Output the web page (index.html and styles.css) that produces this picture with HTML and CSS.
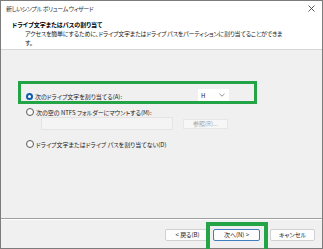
FILE: index.html
```html
<!DOCTYPE html>
<html lang="ja">
<head>
<meta charset="utf-8">
<link rel="stylesheet" href="styles.css">
</head>
<body>
<div class="window">
  <div class="titlebar">
    <span class="title">新しいシンプル ボリューム ウィザード</span>
    <svg class="close" width="7" height="7" viewBox="0 0 7 7"><path d="M0.5 0.5 L6.5 6.5 M6.5 0.5 L0.5 6.5" stroke="#444" stroke-width="0.9" fill="none"/></svg>
  </div>
  <div class="header">
    <div class="h-title">ドライブ文字またはパスの割り当て</div>
    <div class="h-desc">アクセスを簡単にするために、ドライブ文字またはドライブ パスをパーティションに割り当てることができま</div>
    <div class="h-desc">す。</div>
  </div>
  <div class="content">
    <div class="highlight">
      <div class="row row-first">
        <span class="radio checked"></span>
        <span class="label label-fixed">次のドライブ文字を割り当てる(A):</span>
        <span class="dropdown"><span class="dd-val">H</span><svg class="chev" width="6" height="4" viewBox="0 0 6 4"><path d="M0.5 0.8 L3 3.2 L5.5 0.8" stroke="#777" stroke-width="0.8" fill="none"/></svg></span>
      </div>
    </div>
    <div class="row row-second">
      <span class="radio"></span>
      <span class="label">次の空の NTFS フォルダーにマウントする(M):</span>
    </div>
    <div class="pathrow">
      <span class="pathbox"></span>
      <span class="browse">参照(R)...</span>
    </div>
    <div class="row row-third">
      <span class="radio"></span>
      <span class="label">ドライブ文字またはドライブ パスを割り当てない(D)</span>
    </div>
  </div>
  <div class="footer">
    <span class="btn">&lt; 戻る(B)</span>
    <span class="btn btn-next">次へ(N) &gt;</span>
    <span class="btn btn-cancel">キャンセル</span>
  </div>
  <div class="mark-next"></div>
</div>
</body>
</html>
```

FILE: styles.css
```css
html, body {
  margin: 0;
  padding: 0;
  background: #ffffff;
}
body {
  font-family: "Noto Sans CJK JP", "Noto Sans", sans-serif;
  font-size: 6px;
  font-feature-settings: "palt";
  color: #1a1a1a;
  line-height: 9px;
}
.window {
  position: relative;
  width: 321px;
  height: 247px;
  border: 1px solid #7c7c7c;
  background: #f0f0f0;
  display: flex;
  flex-direction: column;
}
.titlebar {
  height: 15px;
  flex: none;
  background: #ffffff;
  display: flex;
  align-items: center;
  justify-content: space-between;
  padding: 0 7px 0 5px;
}
.title {
  color: #333;
  line-height: 15px;
  letter-spacing: -0.4px;
}
.close {
  display: block;
}
.header {
  flex: none;
  height: 34px;
  box-sizing: border-box;
  background: #ffffff;
  padding: 3.5px 0 0 11px;
  border-bottom: 1px solid #d6d6d6;
}
.h-title {
  font-weight: bold;
  color: #000;
}
.h-desc {
  padding-left: 13px;
  color: #1a1a1a;
  white-space: nowrap;
  letter-spacing: -0.2px;
}
.content {
  flex: 1;
  padding: 31px 0 0 17px;
  border-bottom: 1px solid #a0a0a0;
}
.highlight {
  width: 228px;
  border: 3px solid #22a447;
  padding: 4px 0 0 5px;
}
.row {
  display: flex;
  align-items: center;
  height: 9px;
}
.row-first {
  height: 13px;
  align-items: flex-end;
}
.radio {
  width: 6px;
  height: 6px;
  border-radius: 50%;
  border: 1px solid #5c5c5c;
  background: #f8f8f8;
  margin-right: 2px;
  flex: none;
  align-self: center;
}
.row-first .radio {
  align-self: flex-end;
  margin-bottom: 1px;
}
.radio.checked {
  width: 3px;
  height: 3px;
  border: 2.5px solid #0e5cab;
  background: #ffffff;
}
.label-fixed {
  width: 163px;
}
.dropdown {
  width: 31px;
  height: 12px;
  background: #ffffff;
  display: flex;
  align-items: center;
  justify-content: space-between;
  padding: 0 4px 0 3px;
  box-sizing: border-box;
}
.chev {
  display: block;
}
.row-second {
  margin: 3.5px 0 0 8px;
}
.pathrow {
  display: flex;
  align-items: center;
  gap: 10px;
  margin: 0.5px 0 0 23px;
  height: 13px;
}
.pathbox {
  width: 132px;
  height: 13px;
  box-sizing: border-box;
  background: #f4f4f4;
  border: 1px solid #e4e4e4;
}
.browse {
  width: 45px;
  height: 10px;
  box-sizing: border-box;
  background: #f7f7f7;
  border: 1px solid #e6e6e6;
  color: #a3a3a3;
  text-align: center;
  line-height: 8px;
}
.row-third {
  margin: 9.5px 0 0 8px;
}
.footer {
  height: 29px;
  flex: none;
  box-sizing: border-box;
  box-shadow: inset 0 1px #ffffff;
  display: flex;
  align-items: center;
  justify-content: flex-end;
  padding: 3px 7px 0 0;
  gap: 3px;
}
.btn {
  width: 45px;
  height: 12px;
  box-sizing: border-box;
  background: #fdfdfd;
  border: 1px solid #d0d0d0;
  border-radius: 2px;
  text-align: center;
  line-height: 10px;
  color: #1a1a1a;
}
.btn-next {
  width: 47px;
  border-color: #3f7fc0;
}
.btn-cancel {
  margin-left: 7px;
}
.mark-next {
  position: absolute;
  left: 205px;
  top: 221px;
  width: 54px;
  height: 30px;
  border: 4px solid #22a447;
}
```
